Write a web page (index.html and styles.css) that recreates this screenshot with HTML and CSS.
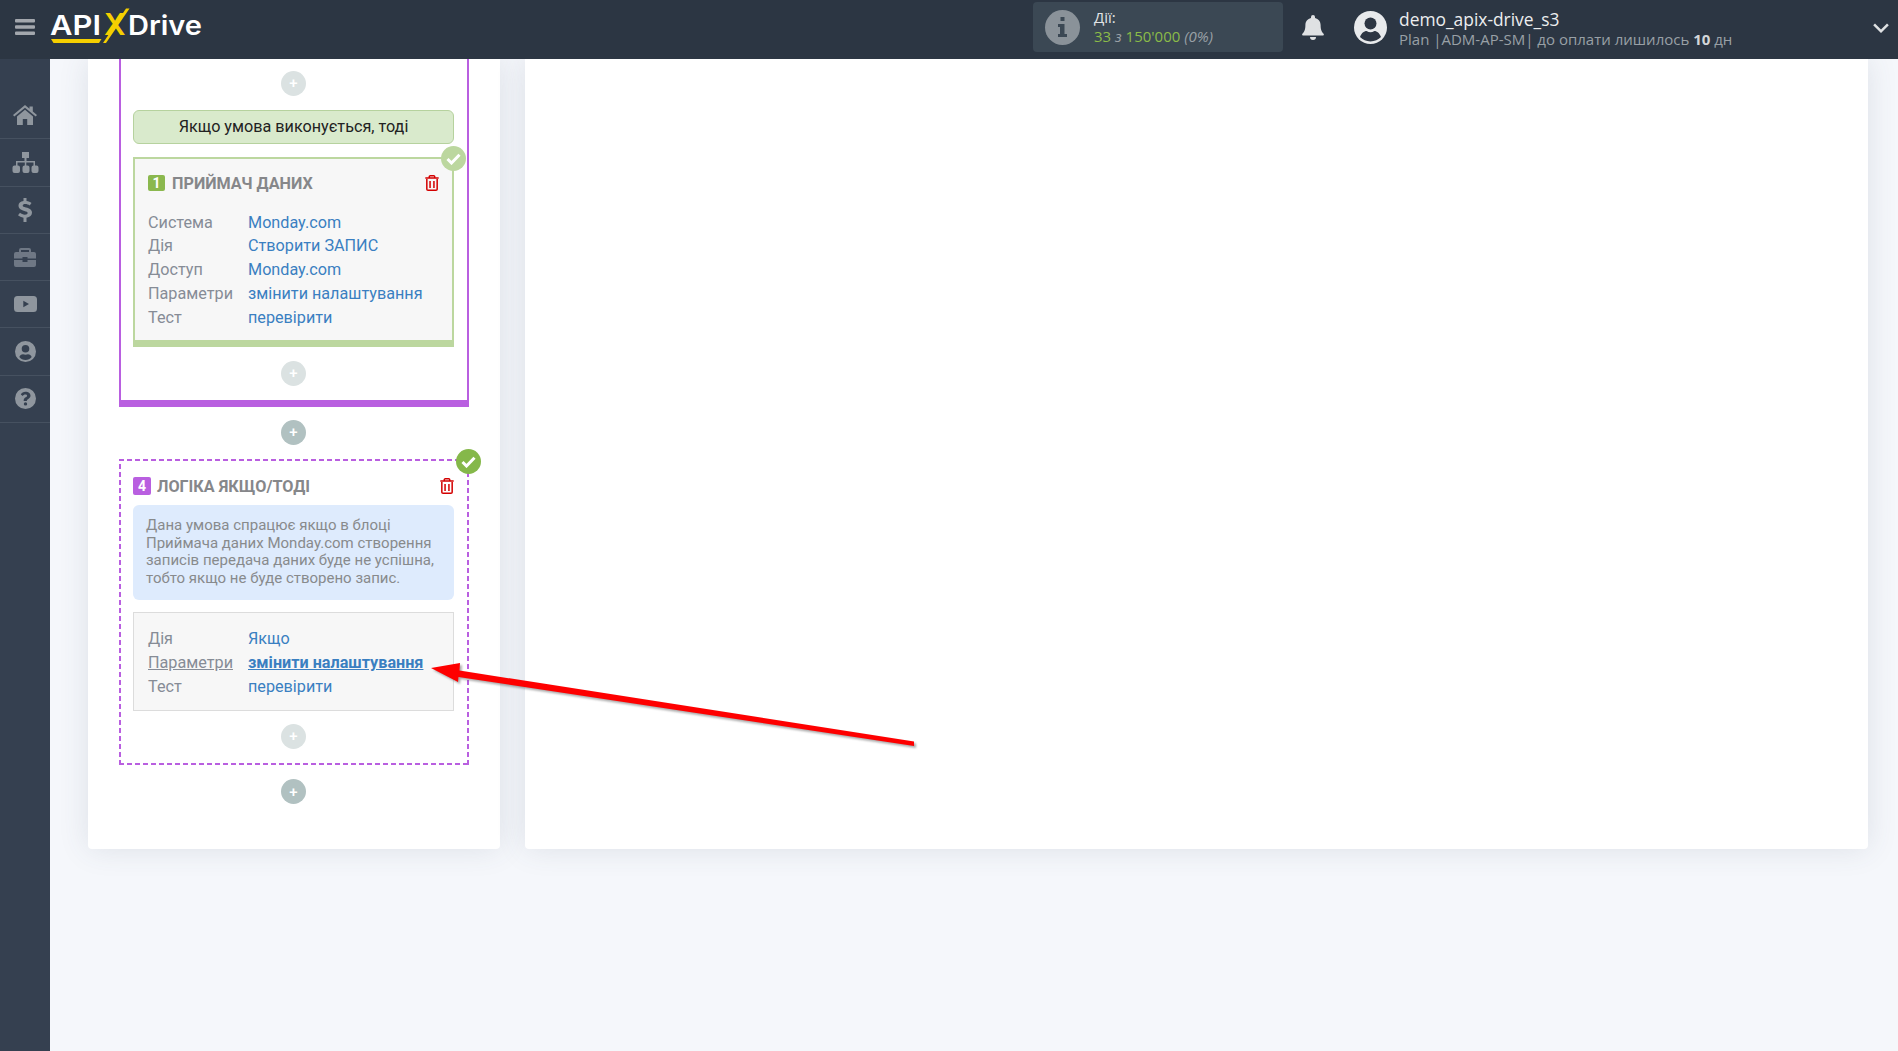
FILE: index.html
```html
<!DOCTYPE html>
<html lang="uk">
<head>
    <meta charset="UTF-8">
    <meta name="viewport" content="width=device-width, initial-scale=1.0">
    <title>ApiX-Drive</title>
    <link rel="stylesheet" href="styles.css">
</head>
<body>
    <header class="topbar">
        <svg class="burger" width="20" height="16" viewBox="0 0 20 16"><path d="M1 0h18a1 1 0 0 1 1 1v1.500a1 1 0 0 1-1 1H1a1 1 0 0 1-1-1V1a1 1 0 0 1 1-1zM1 6.300h18a1 1 0 0 1 1 1v1.500a1 1 0 0 1-1 1H1a1 1 0 0 1-1-1V7.300a1 1 0 0 1 1-1zM1 12.500h18a1 1 0 0 1 1 1V15a1 1 0 0 1-1 1H1a1 1 0 0 1-1-1v-1.500a1 1 0 0 1 1-1z"/></svg>
        <svg class="logo" width="160" height="46" viewBox="0 0 160 46">
            <text class="logo-white" x="0" y="29" textLength="51" lengthAdjust="spacingAndGlyphs">API</text>
            <path class="logo-yellow" d="M1 33h50.500l-2.500 4H3.500z"/>
            <text class="logo-x" x="54" y="29">X</text>
            <path class="logo-yellow" d="M53 37L76 2.500h3.500L56 37z"/>
            <text class="logo-white" x="78" y="29" textLength="74" lengthAdjust="spacingAndGlyphs">Drive</text>
        </svg>
        <div class="actions-box">
            <span class="info-circle">
                <svg width="9" height="20" viewBox="0 0 9 20"><path d="M2.500 0h4v4h-4zM0 7h6.500v10H9v3H0v-3h2v-7H0z"/></svg>
            </span>
            <div>
                <div class="actions-title">Дії:</div>
                <div class="actions-count">33 <i class="grey">з</i> 150'000 <i class="grey">(0%)</i></div>
            </div>
        </div>
        <svg class="bell" width="22" height="25" viewBox="0 0 22 25"><path d="M11 0a2 2 0 0 1 2 2v1.100C16.500 3.900 18.600 6.800 18.600 10c0 5.500 1.500 7.200 3 8.800.4.400.4 1.200-.3 1.700H.7c-.7-.5-.7-1.300-.3-1.700 1.500-1.600 3-3.300 3-8.800 0-3.200 2.100-6.100 5.600-6.900V2a2 2 0 0 1 2-2zM8 22h6a3 3 0 0 1-6 0z"/></svg>
        <svg class="avatar" width="33" height="33" viewBox="0 0 33 33"><circle cx="16.500" cy="16.500" r="16.500" fill="#e8eaec"/><circle cx="16.500" cy="12.500" r="6" fill="#2d3643"/><path d="M6 26c1.500-4.500 5-6 6.500-6 1.500.8 2.700 1.200 4 1.200s2.500-.4 4-1.200c1.500 0 5 1.500 6.500 6-2.600 2.800-6.400 4.400-10.500 4.400S8.600 28.800 6 26z" fill="#2d3643"/></svg>
        <div class="user">
            <div class="user-name">demo_apix-drive_s3</div>
            <div class="user-plan">Plan |ADM-AP-SM| до оплати лишилось <b>10</b> дн</div>
        </div>
        <svg class="chevron" width="16" height="11" viewBox="0 0 16 11"><path d="M2 1.500L8 7.500l6-6 1.800 1.800L8 11 .2 3.300z"/></svg>
    </header>

    <div class="layout">
        <nav class="sidebar">
            <a class="nav-item"><svg width="24" height="20" viewBox="0 0 24 20"><path d="M12 0l4.500 3.800V1.500h3.300v5.100L24 10.100l-1.300 1.500L12 2.800 1.300 11.600 0 10.100zM12 4.800l8 6.600V20h-5.800v-6H9.800v6H4v-8.600z"/></svg></a>
            <a class="nav-item"><svg width="27" height="21" viewBox="0 0 27 21"><path d="M10 0h7v6h-2.500v3H23v4.500h1.500a2 2 0 0 1 2 2V19a2 2 0 0 1-2 2h-3a2 2 0 0 1-2-2v-3.500a2 2 0 0 1 2-2H21.500V10.500h-7.200v3h1.200a2 2 0 0 1 2 2V19a2 2 0 0 1-2 2h-3a2 2 0 0 1-2-2v-3.500a2 2 0 0 1 2-2h.300v-3H5.500v3H6a2 2 0 0 1 2 2V19a2 2 0 0 1-2 2H2.500a2 2 0 0 1-2-2v-3.500a2 2 0 0 1 2-2H4V9h8.500V6H10z"/></svg></a>
            <a class="nav-item"><svg width="14" height="24" viewBox="0 0 14 24"><path d="M5.500 0h3v3c2 .2 3.800 1 5 2l-1.800 2.600c-1.300-1-2.800-1.500-4.500-1.500-1.500 0-2.500.6-2.500 1.500 0 1 1 1.400 3.300 2 3.500.9 6 2 6 5.200 0 2.700-2 4.500-5.500 4.900V24h-3v-4.300c-2.200-.2-4.200-1.200-5.500-2.400l2-2.500c1.300 1.100 3 1.900 4.900 1.900 1.700 0 2.700-.6 2.700-1.600 0-1-1-1.400-3.300-2C2.800 11.700.5 10.500.5 7.500c0-2.400 1.900-4.100 5-4.500z"/></svg></a>
            <a class="nav-item nav-dim"><svg width="22" height="19" viewBox="0 0 22 19"><path d="M7 0h8a2 2 0 0 1 2 2v2h3a2 2 0 0 1 2 2v4.500H13.500V9h-5v1.500H0V6a2 2 0 0 1 2-2h3V2a2 2 0 0 1 2-2zm0 2v2h8V2zM0 12h8.500v2h5v-2H22v5a2 2 0 0 1-2 2H2a2 2 0 0 1-2-2z"/></svg></a>
            <a class="nav-item"><svg width="23" height="16" viewBox="0 0 23 16"><path fill-rule="evenodd" d="M3.500 0h16A3.500 3.500 0 0 1 23 3.500v9a3.500 3.500 0 0 1-3.500 3.500h-16A3.500 3.500 0 0 1 0 12.500v-9A3.500 3.500 0 0 1 3.500 0zM9.300 4.700v6.600L15 8z"/></svg></a>
            <a class="nav-item"><svg width="21" height="21" viewBox="0 0 21 21"><path fill-rule="evenodd" d="M10.500 0a10.500 10.500 0 1 1 0 21 10.500 10.500 0 0 1 0-21zm0 4a3.800 3.800 0 1 0 0 7.600 3.800 3.800 0 0 0 0-7.600zM4.300 16c1.400 1.800 3.700 3 6.200 3s4.800-1.200 6.200-3c-.5-1.600-2-2.800-3.700-2.800-.8.300-1.600.5-2.500.5s-1.700-.2-2.500-.5c-1.700 0-3.200 1.200-3.700 2.800z"/></svg></a>
            <a class="nav-item"><svg width="21" height="21" viewBox="0 0 21 21"><path fill-rule="evenodd" d="M10.500 0a10.500 10.500 0 1 1 0 21 10.500 10.500 0 0 1 0-21zm0 3.800c-2.200 0-3.700 1-4.700 2.600l2 1.500c.6-.8 1.300-1.400 2.500-1.400 1 0 1.800.5 1.800 1.300 0 .7-.5 1-1.400 1.500-1.100.6-2 1.400-2 3v.6h3.200c0-1 .2-1.300 1.400-2 1.300-.7 2.200-1.600 2.200-3.300 0-2.400-2.500-3.800-5-3.800zm0 10.400a1.700 1.700 0 1 0 0 3.400 1.700 1.700 0 0 0 0-3.400z"/></svg></a>
        </nav>

        <main class="content">
            <section class="panel panel-left">
                <div class="block-purple">
                    <span class="plus plus-light">+</span>
                    <div class="condition">Якщо умова виконується, тоді</div>
                    <div class="card card-green">
                        <span class="check check-light"><svg width="15" height="12" viewBox="0 0 15 12"><path d="M1.500 6l4 4 8-8.300" /></svg></span>
                        <div class="card-head">
                            <span class="num num-green">1</span>
                            <span class="card-title">ПРИЙМАЧ ДАНИХ</span>
                            <svg class="trash" width="14" height="16" viewBox="0 0 13 16" preserveAspectRatio="none"><path d="M1.700 4v10.200c0 .6.500 1.100 1.100 1.100h7.400c.6 0 1.100-.5 1.100-1.100V4M.300 3h12.400M4 3V1.600c0-.5.400-.9.900-.9h3.200c.5 0 .9.400.9.900V3M4.700 6v7M8.300 6v7"/></svg>
                        </div>
                        <div class="rows">
                            <span class="row-label">Система</span><a class="row-value">Monday.com</a>
                            <span class="row-label">Дія</span><a class="row-value">Створити ЗАПИС</a>
                            <span class="row-label">Доступ</span><a class="row-value">Monday.com</a>
                            <span class="row-label">Параметри</span><a class="row-value">змінити налаштування</a>
                            <span class="row-label">Тест</span><a class="row-value">перевірити</a>
                        </div>
                    </div>
                    <span class="plus plus-light">+</span>
                </div>

                <span class="plus plus-dark">+</span>

                <div class="block-dashed">
                    <span class="check check-strong"><svg width="15" height="12" viewBox="0 0 15 12"><path d="M1.500 6l4 4 8-8.300" /></svg></span>
                    <div class="card-head card-head-logic">
                        <span class="num num-purple">4</span>
                        <span class="card-title">ЛОГІКА ЯКЩО/ТОДІ</span>
                        <svg class="trash" width="14" height="16" viewBox="0 0 13 16" preserveAspectRatio="none"><path d="M1.700 4v10.200c0 .6.500 1.100 1.100 1.100h7.400c.6 0 1.100-.5 1.100-1.100V4M.300 3h12.400M4 3V1.600c0-.5.400-.9.900-.9h3.200c.5 0 .9.400.9.900V3M4.700 6v7M8.300 6v7"/></svg>
                    </div>
                    <div class="note">Дана умова спрацює якщо в блоці Приймача даних Monday.com створення записів передача даних буде не успішна, тобто якщо не буде створено запис.</div>
                    <div class="card card-grey">
                        <div class="rows">
                            <span class="row-label">Дія</span><a class="row-value">Якщо</a>
                            <span class="row-label row-active">Параметри</span><a class="row-value row-value-active">змінити налаштування</a>
                            <span class="row-label">Тест</span><a class="row-value">перевірити</a>
                        </div>
                    </div>
                    <span class="plus plus-light">+</span>
                </div>

                <span class="plus plus-dark plus-last">+</span>
            </section>

            <section class="panel panel-right"></section>
        </main>
    </div>

    <!-- annotation on top of the page -->
    <svg class="arrow" width="1898" height="1051" viewBox="0 0 1898 1051">
        <path class="arrow-shadow" d="M431 668L460 663 459.500 670.500 914 741.500 914 746 458.500 677 458 682z"/>
        <path class="arrow-red" d="M431 668L460 663 459.500 670.500 914 741.500 914 746 458.500 677 458 682z"/>
    </svg>
</body>
</html>
```

FILE: styles.css
```css
* {
    box-sizing: border-box;
}
html, body {
    margin: 0;
    height: 100%;
}
body {
    font-family: Roboto, "Liberation Sans", sans-serif;
    background: #f5f7fb;
    overflow: hidden;
    position: relative;
}

/* top bar */
.topbar {
    height: 59px;
    padding-bottom: 5px;
    background: #2c3643;
    display: flex;
    align-items: center;
    font-family: "Open Sans", "Liberation Sans", sans-serif;
    position: relative;
    z-index: 2;
}
.burger {
    fill: #a3a7ad;
    margin-left: 15px;
    flex: none;
}
.logo {
    margin: 6px 0 0 15px;
    flex: none;
    align-self: flex-start;
}
.logo-white {
    font-family: Inter, "Liberation Sans", sans-serif;
    font-weight: 600;
    font-size: 27px;
    fill: #fff;
}
.logo-x {
    font-family: Inter, "Liberation Sans", sans-serif;
    font-weight: 600;
    font-size: 30px;
    fill: #f5cf00;
}
.logo-yellow {
    fill: #f5cf00;
}
.actions-box {
    margin-left: 823px;
    width: 250px;
    height: 50px;
    background: #3b4854;
    border-radius: 4px;
    display: flex;
    align-items: center;
    padding-left: 12px;
    flex: none;
}
.info-circle {
    width: 35px;
    height: 35px;
    border-radius: 50%;
    background: #8a9299;
    display: flex;
    align-items: center;
    justify-content: center;
    margin-right: 14px;
    flex: none;
}
.info-circle svg {
    fill: #3b4854;
}
.actions-title {
    font-size: 15px;
    line-height: 18px;
    color: #e2e4e6;
}
.actions-count {
    font-size: 15px;
    line-height: 20px;
    color: #8bbb48;
}
.grey {
    color: #99a0a6;
}
.bell {
    fill: #dfe1e3;
    margin-left: 19px;
    flex: none;
}
.avatar {
    margin-left: 30px;
    flex: none;
}
.user {
    margin: 4px 0 0 12px;
    flex: none;
}
.user-name {
    font-size: 17.400px;
    line-height: 21px;
    color: #eceeef;
}
.user-plan {
    font-size: 15px;
    line-height: 19px;
    color: #99a0a6;
}
.user-plan b {
    color: #d3d6d9;
}
.chevron {
    fill: #dfe1e3;
    margin-left: auto;
    margin-right: 9px;
    flex: none;
}

/* sidebar and content */
.layout {
    display: flex;
    height: calc(100% - 59px);
}
.sidebar {
    width: 50px;
    flex: none;
    background: #354050;
    padding-top: 33px;
}
.nav-item {
    height: 47.3px;
    display: flex;
    align-items: center;
    justify-content: center;
    border-bottom: 1px solid #465160;
}
.nav-item svg {
    fill: #8f969e;
}
.nav-item.nav-dim svg {
    fill: #6f7885;
}
.content {
    flex: 1;
    display: flex;
    align-items: flex-start;
    gap: 25px;
    padding-left: 38px;
    padding-right: 30px;
}
.panel {
    background: #fff;
    border-radius: 0 0 4px 4px;
    box-shadow: 0 0 30px rgba(60, 75, 100, 0.13);
    height: 790px;
}
.panel-left {
    width: 412px;
    flex: none;
    padding: 0 32px 0 31px;
}
.panel-right {
    flex: 1;
}

/* blocks */
.plus {
    display: flex;
    width: 25px;
    height: 25px;
    border-radius: 50%;
    align-items: center;
    justify-content: center;
    color: #fff;
    font-size: 15px;
    font-weight: 500;
    margin: 0 auto;
}
.plus-light {
    background: #dbe2e2;
}
.plus-dark {
    background: #b1c1c1;
    margin: 12.5px auto 14.5px;
}
.plus-last {
    margin-top: 14px;
}
.block-purple {
    width: 350px;
    border: solid #b95fe0;
    border-width: 0 2px 7px;
    padding: 11.5px 13px 14.5px 12px;
}
.condition {
    height: 34px;
    margin: 14.5px 0 13px;
    background: #d9eacc;
    border: 1px solid #b6d29e;
    border-radius: 6px;
    text-align: center;
    font-size: 16.200px;
    line-height: 32px;
    color: #222;
}
.card {
    background: #f7f7f7;
    position: relative;
    margin-bottom: 13.5px;
}
.card-green {
    height: 190px;
    border: solid #bcd79f;
    border-width: 2px 2px 7px;
    padding: 12px 13px 0;
}
.card-grey {
    height: 99px;
    border: 1px solid #dcdcdc;
    padding: 14.300px 13px 0 14px;
    margin-bottom: 12.5px;
}
.card-head {
    display: flex;
    align-items: center;
    height: 24px;
}
.num {
    width: 17px;
    height: 16px;
    border-radius: 2px;
    color: #fff;
    font-size: 14px;
    font-weight: 700;
    line-height: 16px;
    text-align: center;
    margin-right: 7px;
    flex: none;
}
.num-green {
    background: #8bb84e;
}
.num-purple {
    background: #b95fe0;
    width: 18px;
    height: 18px;
    line-height: 18px;
    margin-right: 6px;
}
.card-title {
    font-size: 16.200px;
    font-weight: 700;
    color: #86878a;
}
.trash {
    margin-left: auto;
    fill: none;
    stroke: #d30000;
    stroke-width: 1.400;
    flex: none;
}
.rows {
    display: grid;
    grid-template-columns: 100px 1fr;
    grid-auto-rows: 23.8px;
    font-size: 16.200px;
    line-height: 23.8px;
    white-space: nowrap;
}
.card-green .rows {
    margin-top: 15.6px;
}
.row-label {
    color: #868c96;
}
.row-value {
    color: #3a7fc1;
}
.row-active {
    text-decoration: underline;
}
.row-value-active {
    font-weight: 700;
    text-decoration: underline;
}
/* dashes are 5 on, 3 off, longer than border: dashed gives */
.block-dashed {
    width: 350px;
    height: 306px;
    padding: 15px 15px 0 14px;
    position: relative;
    background:
        repeating-linear-gradient(90deg, #b95fe0 0 5px, transparent 5px 8px) top / 100% 2px no-repeat,
        repeating-linear-gradient(90deg, #b95fe0 0 5px, transparent 5px 8px) bottom / 100% 2px no-repeat,
        repeating-linear-gradient(0deg, #b95fe0 0 5px, transparent 5px 8px) left / 2px 100% no-repeat,
        repeating-linear-gradient(0deg, #b95fe0 0 5px, transparent 5px 8px) right / 2px 100% no-repeat;
}
.card-head-logic {
    margin-bottom: 7px;
}
.note {
    height: 95px;
    background: #deebfd;
    border-radius: 6px;
    padding: 12px 13px;
    font-size: 15px;
    line-height: 17.500px;
    color: #888a8c;
    margin-bottom: 12px;
}

/* status circles sit on the block corner */
.check {
    position: absolute;
    width: 25px;
    height: 25px;
    border-radius: 50%;
    display: flex;
    align-items: center;
    justify-content: center;
}
.check svg {
    fill: none;
    stroke: #fff;
    stroke-width: 3;
}
.check-light {
    background: #bcd79f;
    right: -14px;
    top: -13px;
}
.check-strong {
    background: #85b84a;
    right: -12px;
    top: -10px;
}

/* red arrow drawn over the page */
.arrow {
    position: absolute;
    top: 0;
    left: 0;
    pointer-events: none;
    z-index: 3;
}
.arrow-red {
    fill: #fe0000;
}
.arrow-shadow {
    fill: #555;
    opacity: 0.5;
    transform: translate(2px, 2px);
    filter: blur(1px);
}
```
